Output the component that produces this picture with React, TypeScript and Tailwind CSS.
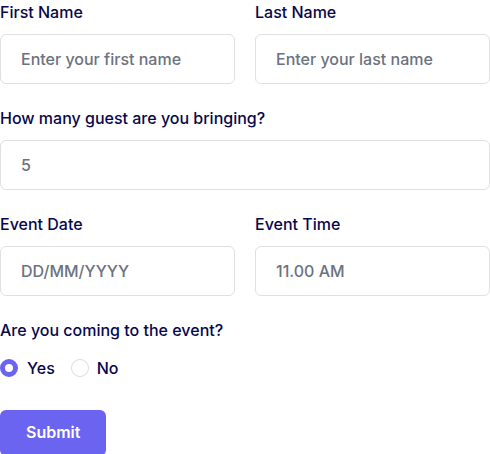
import React from "react";

const labelCls = "mb-[10px] block text-base font-medium leading-6 text-[#07074D]";
const inputCls =
  "w-full h-[50px] rounded-md border border-[#e0e0e0] bg-white px-5 text-base font-medium text-[#6B7280] placeholder:text-[#6B7280] outline-none";

export default function App() {
  return (
    <div className="w-[490px] h-[454px] overflow-hidden bg-white" style={{ fontFamily: "Inter, 'Noto Sans', sans-serif" }}>
      <div>
        <div className="grid grid-cols-2 gap-5">
          <div className="mb-[22px]">
            <label className={labelCls}>First Name</label>
            <input className={inputCls} placeholder="Enter your first name" />
          </div>
          <div className="mb-[22px]">
            <label className={labelCls}>Last Name</label>
            <input className={inputCls} placeholder="Enter your last name" />
          </div>
        </div>
        <div className="mb-[22px]">
          <label className={labelCls}>How many guest are you bringing?</label>
          <input className={inputCls} defaultValue="5" placeholder="5" />
        </div>
        <div className="grid grid-cols-2 gap-5">
          <div className="mb-[22px]">
            <label className={labelCls}>Event Date</label>
            <input className={inputCls} placeholder="DD/MM/YYYY" />
          </div>
          <div className="mb-[22px]">
            <label className={labelCls}>Event Time</label>
            <input className={inputCls} placeholder="11.00 AM" />
          </div>
        </div>
        <div>
          <label className={labelCls}>Are you coming to the event?</label>
          <div className="mt-[14px] flex items-center gap-4 h-6">
            <div className="flex items-center">
              <span className="h-[18px] w-[18px] rounded-full border-[5px] border-[#6A64F1] bg-white" />
              <span className="pl-[9px] text-base font-medium text-[#07074D]">Yes</span>
            </div>
            <div className="flex items-center">
              <span className="h-[18px] w-[18px] rounded-full border border-[#dddde3] bg-white" />
              <span className="pl-[8px] text-base font-medium text-[#07074D]">No</span>
            </div>
          </div>
        </div>
        <div className="mt-[30px]">
          <button className="rounded-md bg-[#6A64F1] px-[26px] pt-[10px] pb-3 text-base font-semibold leading-6 text-white">
            Submit
          </button>
        </div>
      </div>
    </div>
  );
}
